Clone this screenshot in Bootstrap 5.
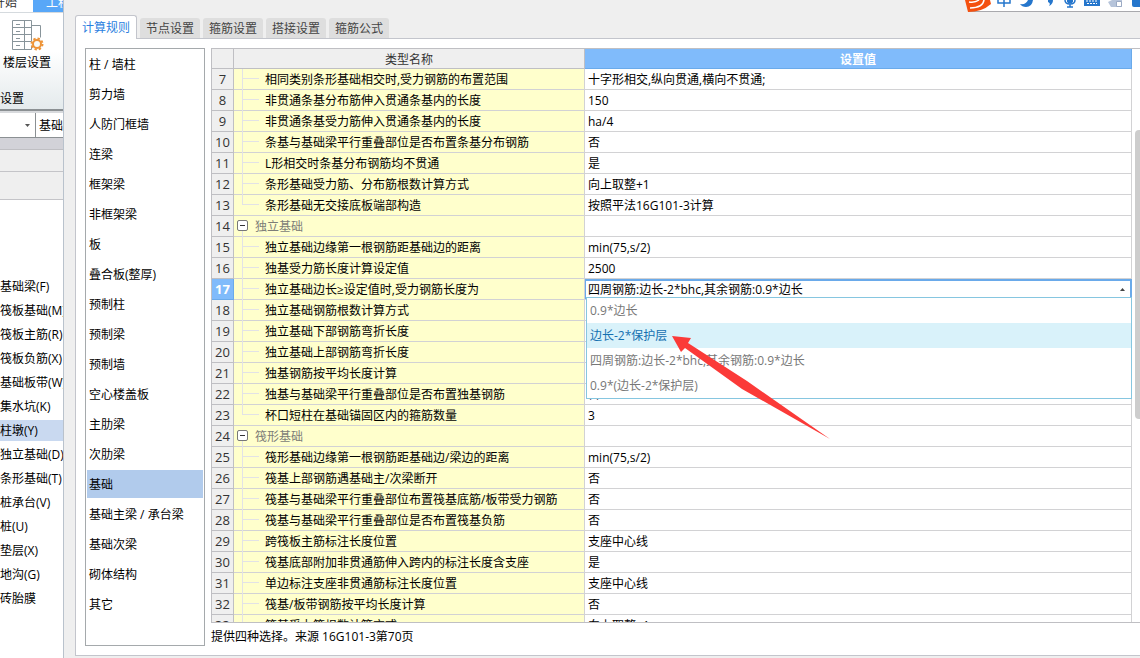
<!DOCTYPE html>
<html lang="zh-CN">
<head>
<meta charset="utf-8">
<meta name="viewport" content="width=device-width, initial-scale=1">
<title>计算规则</title>
<link href="https://cdn.jsdelivr.net/npm/bootstrap@5.3.0/dist/css/bootstrap.min.css" rel="stylesheet">
<style>
  body { font: 12px/20px "Open Sans", "Noto Sans CJK SC", sans-serif; color: #000; background: #efefef; }
  button, select { font: inherit; color: inherit; }

  /* left application strip */
  .strip { width: 64px; border-right: 1px solid #b9c2cc; background: #fff; white-space: nowrap; }
  .strip-tabs { height: 12px; }
  .strip-tabs a { line-height: 20px; margin-top: -7px; color: #333; text-decoration: none; }
  .strip-tabs .first-tab { width: 33px; }
  .strip-tabs .main-tab { background: #58a7f8; color: #fff; padding-left: 13px; }
  .ribbon { height: 99px; border-top: 1px solid #d5dade; border-bottom: 2px solid #8b9093; background: linear-gradient(#fff 40%, #e4eaec); }
  .ribbon-btn { padding: 6px 0 0 3px; text-align: left; }
  .ribbon-btn svg { margin: 0 0 2px 8px; }
  .picker { height: 27px; border-top: 2px solid #d8dadd; border-bottom: 1px solid #8b9093; }
  .picker-caret { width: 36px; border-right: 1px solid #8b9093; padding-right: 5px; }
  .picker-text { padding: 2px 0 0 3px; }
  .band { background: #d2d2d8; height: 12px; border-bottom: 1px solid #bfbfc3; }
  .band-light { background: #efefef; border-bottom: 1px solid #c4c4c8; height: 22px; }
  .band-tall { height: 28px; }
  .tree-nav { padding-top: 76px; gap: 3px; }
  .tree-nav a { color: #000; text-decoration: none; line-height: 21px; }
  .tree-nav a.active { background: #c9d9f0; }

  /* floating input bar */
  .ime { top: 0; right: 0; width: 172px; height: 12px; background: #fff; border-bottom: 1px solid #a9a9ad; }
  .ime svg { top: 0; right: 0; }

  /* tabs */
  .workspace { padding: 15px 0 2px 11px; }
  .rule-tabs { gap: 3px; border: 0; margin-bottom: -1px; }
  .rule-tabs .nav-link { width: 60px; padding: 1px 0 0; border: 0; border-radius: 3px 3px 0 0; background: #dedede; color: #444; line-height: 20px; height: 20px; margin-bottom: 1px; }
  .rule-tabs .nav-link.active { width: 62px; height: 24px; line-height: 22px; border: 1px solid #c3c5cc; border-bottom: 0; background: #fff; color: #2b7fe0; margin: 0; }
  .sheet { background: #fff; border: 1px solid #c3c5cc; border-right: 0; padding: 9px 0 9px 9px; gap: 6px; }

  /* component list */
  .part-list { width: 120px; border: 1px solid #a5a9ac; padding: 1px; gap: 2px; }
  .part-list a { line-height: 26px; padding: 2px 0 0 2px; color: #000; text-decoration: none; white-space: nowrap; }
  .part-list a.active { background: #b1cbec; }

  /* grid */
  .grid-box { border: 1px solid #bfbfc3; border-right: 0; }
  .rules { border-collapse: separate; border-spacing: 0; table-layout: fixed; width: 100%; line-height: 20px; }
  .rules th, .rules td { height: 21px; padding: 0; border: solid #d2d2d4; border-width: 0 1px 1px 0; white-space: nowrap; font-weight: 400; }
  .rules thead th { height: 20px; padding-top: 2px; line-height: 17px; text-align: center; background: #efefef; border-color: #bfbfc3; color: #333; }
  .rules thead .value-head { background: #80bbfb; border-color: #6aaaea; color: #fff; font-weight: 700; }
  .rules tbody th { background: #efefef; border-color: #bfbfc3; text-align: center; font-size: 13px; color: #333; }
  .rules tbody .current { background: #80bbfb; border-color: #6aaaea; color: #fff; font-weight: 700; }
  .col-no { width: 22px; }
  .col-name { width: 351px; }
  .rules tbody td { padding: 2px 0 0 3px; line-height: 18px; }
  .rules td:nth-child(2) { background: #ffffcc; padding-left: 31px; position: relative; }
  /* connector lines of the tree */
  .rules td:nth-child(2)::before { content: ""; position: absolute; left: 8px; top: 0; bottom: -1px; border-left: 1px solid #e2e2e6; }
  .rules td:nth-child(2)::after { content: ""; position: absolute; left: 9px; top: 9px; width: 16px; border-top: 1px solid #e2e2e6; }
  .rules .last td:nth-child(2)::before { bottom: 10px; }
  .rules .group td:nth-child(2) { padding-left: 3px; color: #7d7d78; }
  .rules .group td:nth-child(2)::before { top: 15px; }
  .rules .group td:nth-child(2)::after { content: none; }
  .toggle { width: 11px; height: 11px; border: 1px solid #777; border-radius: 2px; background: #fff; margin: -4px 7px 0 0; }
  .toggle::before { content: ""; width: 5px; border-top: 1px solid #333; }

  .rules tbody td.editing { padding: 0; }
  .editor { height: 20px; margin-right: -1px; }
  .editor select { width: 100%; height: 20px; line-height: 16px; border: 2px solid #6aaaea; border-width: 2px 2px 0 1px; padding: 0 0 0 2px; appearance: none; background: #fff; outline: 0; display: block; }
  .editor .up { right: 7px; top: 9px; }
  .choices { top: 18px; left: 1px; right: 0; border: 1px solid #86c6e0; background: #fff; z-index: 2; }
  .choices button { display: block; width: 100%; border: 0; background: #fff; text-align: left; padding: 0 3px; line-height: 25px; color: #777; }
  .choices button.active { background: #d9f2fa; color: #1470b0; }
  .pointer { left: 87px; top: 57px; z-index: 3; }

  .track { width: 8px; padding: 81px 0 0 3px; }
  .thumb { height: 289px; background: #cdcdcd; border-radius: 4px 0 0 4px; }
  .hint { line-height: 18px; padding-top: 5px; }
</style>
</head>
<body class="vh-100 d-flex overflow-hidden">

<aside class="strip flex-shrink-0 overflow-hidden d-flex flex-column">
  <nav class="strip-tabs d-flex overflow-hidden flex-shrink-0">
    <a href="#" class="first-tab"><span class="float-end pe-3 me-n1">开始</span></a>
    <a href="#" class="main-tab flex-fill">工程设置</a>
  </nav>
  <div class="ribbon flex-shrink-0 d-flex flex-column">
    <button type="button" class="ribbon-btn border-0 bg-transparent">
      <svg class="d-block" width="34" height="32" fill="none" stroke="#88949a">
        <path d="M1.500 1.500h19v29h-19zM1.500 8.500h19M1.500 15.500h19M1.500 22.500h19M13.500 1.500v29M5 5.500h4M5 12.500h4M5 19.500h4M5 26.500h4M20.500 6.500h9v12"/>
        <circle cx="26" cy="25" r="6" fill="#f7faf9" stroke="none"/>
        <g stroke="#ee9336"><circle cx="26" cy="25" r="4" stroke-width="2"/><circle cx="26" cy="25" r="5.500" stroke-width="2" stroke-dasharray="2.300 2"/></g>
      </svg>
      <span class="d-block">楼层设置</span>
    </button>
    <span class="mt-auto">设置</span>
  </div>
  <div class="picker flex-shrink-0 d-flex align-items-center">
    <div class="picker-caret flex-shrink-0 d-flex h-100 align-items-center justify-content-end"><svg width="5" height="3"><path d="M0 0h5L2.500 3z" fill="#555"/></svg></div>
    <span class="picker-text">基础层</span>
  </div>
  <div class="band flex-shrink-0"></div>
  <div class="band-light flex-shrink-0"></div>
  <div class="band-light band-tall flex-shrink-0"></div>
  <nav class="tree-nav d-flex flex-column">
    <a href="#">基础梁(F)</a>
    <a href="#">筏板基础(M)</a>
    <a href="#">筏板主筋(R)</a>
    <a href="#">筏板负筋(X)</a>
    <a href="#">基础板带(W)</a>
    <a href="#">集水坑(K)</a>
    <a href="#" class="active">柱墩(Y)</a>
    <a href="#">独立基础(D)</a>
    <a href="#">条形基础(T)</a>
    <a href="#">桩承台(V)</a>
    <a href="#">桩(U)</a>
    <a href="#">垫层(X)</a>
    <a href="#">地沟(G)</a>
    <a href="#">砖胎膜</a>
  </nav>
</aside>

<main class="workspace flex-fill d-flex flex-column" style="min-width:0">
  <div class="nav nav-tabs rule-tabs align-items-end position-relative" role="tablist">
    <button type="button" class="nav-link active" role="tab" aria-selected="true">计算规则</button>
    <button type="button" class="nav-link" role="tab">节点设置</button>
    <button type="button" class="nav-link" role="tab">箍筋设置</button>
    <button type="button" class="nav-link" role="tab">搭接设置</button>
    <button type="button" class="nav-link" role="tab">箍筋公式</button>
  </div>

  <section class="sheet flex-fill d-flex overflow-hidden" role="tabpanel">
    <nav class="part-list flex-shrink-0 d-flex flex-column">
      <a href="#">柱 / 墙柱</a>
      <a href="#">剪力墙</a>
      <a href="#">人防门框墙</a>
      <a href="#">连梁</a>
      <a href="#">框架梁</a>
      <a href="#">非框架梁</a>
      <a href="#">板</a>
      <a href="#">叠合板(整厚)</a>
      <a href="#">预制柱</a>
      <a href="#">预制梁</a>
      <a href="#">预制墙</a>
      <a href="#">空心楼盖板</a>
      <a href="#">主肋梁</a>
      <a href="#">次肋梁</a>
      <a href="#" class="active">基础</a>
      <a href="#">基础主梁 / 承台梁</a>
      <a href="#">基础次梁</a>
      <a href="#">砌体结构</a>
      <a href="#">其它</a>
    </nav>

    <div class="flex-fill d-flex flex-column" style="min-width:0">
      <div class="grid-box flex-fill d-flex overflow-hidden" style="min-height:0">
        <div class="flex-fill">
          <table class="rules">
            <colgroup><col class="col-no"><col class="col-name"><col></colgroup>
            <thead><tr><th scope="col"></th><th scope="col">类型名称</th><th scope="col" class="value-head">设置值</th></tr></thead>
            <tbody>
              <tr><th scope="row">7</th><td>相同类别条形基础相交时,受力钢筋的布置范围</td><td>十字形相交,纵向贯通,横向不贯通;</td></tr>
              <tr><th scope="row">8</th><td>非贯通条基分布筋伸入贯通条基内的长度</td><td>150</td></tr>
              <tr><th scope="row">9</th><td>非贯通条基受力筋伸入贯通条基内的长度</td><td>ha/4</td></tr>
              <tr><th scope="row">10</th><td>条基与基础梁平行重叠部位是否布置条基分布钢筋</td><td>否</td></tr>
              <tr><th scope="row">11</th><td>L形相交时条基分布钢筋均不贯通</td><td>是</td></tr>
              <tr><th scope="row">12</th><td>条形基础受力筋、分布筋根数计算方式</td><td>向上取整+1</td></tr>
              <tr class="last"><th scope="row">13</th><td>条形基础无交接底板端部构造</td><td>按照平法16G101-3计算</td></tr>
              <tr class="group"><th scope="row">14</th><td><button type="button" class="toggle p-0 d-inline-flex align-items-center justify-content-center align-middle" aria-label="折叠"></button>独立基础</td><td></td></tr>
              <tr><th scope="row">15</th><td>独立基础边缘第一根钢筋距基础边的距离</td><td>min(75,s/2)</td></tr>
              <tr><th scope="row">16</th><td>独基受力筋长度计算设定值</td><td>2500</td></tr>
              <tr><th scope="row" class="current">17</th><td>独立基础边长≥设定值时,受力钢筋长度为</td>
                <td class="editing">
                  <div class="editor position-relative">
                    <select aria-label="受力钢筋长度"><option>四周钢筋:边长-2*bhc,其余钢筋:0.9*边长</option></select>
                    <svg class="up position-absolute" width="5" height="3"><path d="M2.500 0L5 3H0z" fill="#444"/></svg>
                    <div class="choices position-absolute">
                      <button type="button">0.9*边长</button>
                      <button type="button" class="active">边长-2*保护层</button>
                      <button type="button">四周钢筋:边长-2*bhc,其余钢筋:0.9*边长</button>
                      <button type="button">0.9*(边长-2*保护层)</button>
                    </div>
                    <svg class="pointer position-absolute" width="159" height="104"><path d="M0 0L19 2L16 7L75 45L158 103L70 53L13 12L9 16Z" fill="#fb3a38"/></svg>
                  </div>
                </td></tr>
              <tr><th scope="row">18</th><td>独立基础钢筋根数计算方式</td><td></td></tr>
              <tr><th scope="row">19</th><td>独立基础下部钢筋弯折长度</td><td></td></tr>
              <tr><th scope="row">20</th><td>独立基础上部钢筋弯折长度</td><td></td></tr>
              <tr><th scope="row">21</th><td>独基钢筋按平均长度计算</td><td></td></tr>
              <tr><th scope="row">22</th><td>独基与基础梁平行重叠部位是否布置独基钢筋</td><td>否</td></tr>
              <tr class="last"><th scope="row">23</th><td>杯口短柱在基础锚固区内的箍筋数量</td><td>3</td></tr>
              <tr class="group"><th scope="row">24</th><td><button type="button" class="toggle p-0 d-inline-flex align-items-center justify-content-center align-middle" aria-label="折叠"></button>筏形基础</td><td></td></tr>
              <tr><th scope="row">25</th><td>筏形基础边缘第一根钢筋距基础边/梁边的距离</td><td>min(75,s/2)</td></tr>
              <tr><th scope="row">26</th><td>筏基上部钢筋遇基础主/次梁断开</td><td>否</td></tr>
              <tr><th scope="row">27</th><td>筏基与基础梁平行重叠部位布置筏基底筋/板带受力钢筋</td><td>否</td></tr>
              <tr><th scope="row">28</th><td>筏基与基础梁平行重叠部位是否布置筏基负筋</td><td>否</td></tr>
              <tr><th scope="row">29</th><td>跨筏板主筋标注长度位置</td><td>支座中心线</td></tr>
              <tr><th scope="row">30</th><td>筏基底部附加非贯通筋伸入跨内的标注长度含支座</td><td>是</td></tr>
              <tr><th scope="row">31</th><td>单边标注支座非贯通筋标注长度位置</td><td>支座中心线</td></tr>
              <tr><th scope="row">32</th><td>筏基/板带钢筋按平均长度计算</td><td>否</td></tr>
              <tr><th scope="row">33</th><td>筏基受力筋根数计算方式</td><td>向上取整+1</td></tr>
            </tbody>
          </table>
        </div>
        <div class="track flex-shrink-0"><div class="thumb"></div></div>
      </div>
      <div class="hint">提供四种选择。来源 16G101-3第70页</div>
    </div>
  </section>
</main>

<div class="ime position-fixed">
  <svg class="position-absolute" width="176" height="13" fill="none">
    <path d="M1 0L4 12Q18 12 27 4L26 0Z" fill="#f4500f"/><path d="M5 2Q11 3 15 0M6 8Q19 8 20 0" stroke="#fff" stroke-width="1.500"/>
    <g stroke="#2576cc" stroke-width="1.500"><path d="M34 0v3h12V0M40 0v7"/></g>
    <path d="M56 4Q62 5 64 0H69Q68 7 62 7Q58 7 56 4Z" fill="#2576cc"/>
    <path d="M84 0h5Q89 4 85 6Q87 3 84 2Z" fill="#2576cc"/>
    <path d="M103 0h6v2q-3 3-6 0z" fill="#2576cc"/><path d="M101 0Q101 4 106 4Q111 4 111 0M106 4v3M103 7h6" stroke="#2576cc" stroke-width="1.500"/>
    <path d="M120 0h16v6h-16z" fill="#2576cc"/><path d="M122 1h12M123 3.500h10" stroke="#fff" stroke-dasharray="2 1"/>
    <path d="M144 2L148 0h10v7h-11z" fill="#b6c4da"/><path d="M152.500 1.500h5v5h-5z" fill="#fff" stroke="#9baac4"/>
    <path d="M168 0h8v7h-6q-2 0-2-2z" fill="#2576cc"/>
  </svg>
</div>

<script src="https://cdn.jsdelivr.net/npm/bootstrap@5.3.0/dist/js/bootstrap.bundle.min.js"></script>
</body>
</html>
